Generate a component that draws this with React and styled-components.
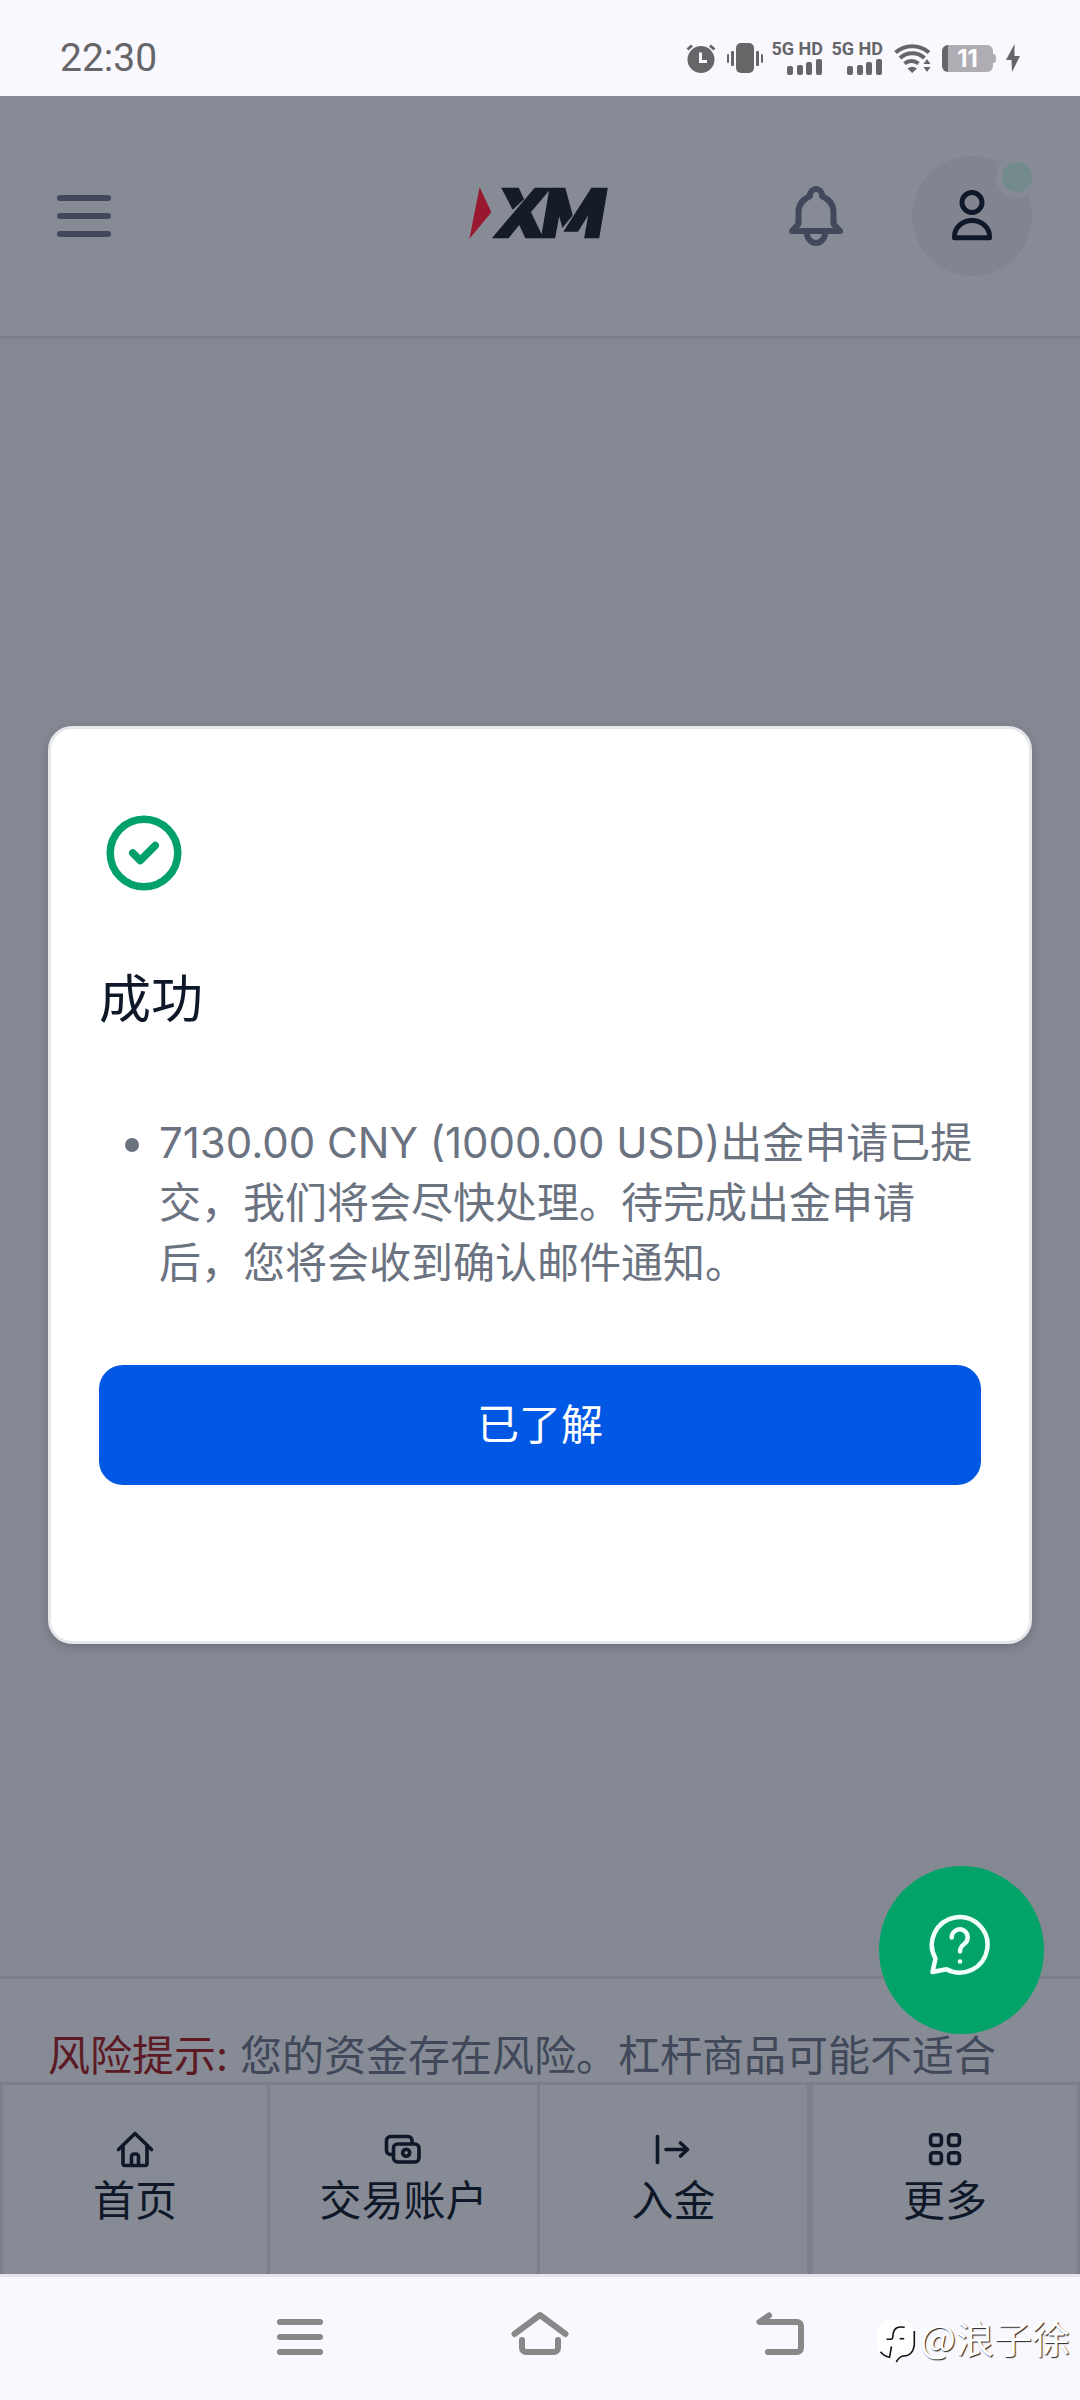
import React, { useState } from 'react';
import styled, { createGlobalStyle } from 'styled-components';

const tabs = [
  { label: '首页', icon: 'home' },
  { label: '交易账户', icon: 'accounts' },
  { label: '入金', icon: 'deposit' },
  { label: '更多', icon: 'more' },
];

const tabIcons = {
  home: (
    <>
      <path d="M4.5 20.5L21 4.5L37.5 20.5" />
      <path d="M9 17.5V34.5a2 2 0 0 0 2 2h20a2 2 0 0 0 2-2V17.5" />
      <path d="M17.5 36V27.5a2.5 2.5 0 0 1 2.5-2.5h2a2.5 2.5 0 0 1 2.5 2.5V36" />
    </>
  ),
  accounts: (
    <>
      <path d="M9 25.5H7.5a4 4 0 0 1-4-4V11.5a4 4 0 0 1 4-4H25a4 4 0 0 1 4 4V14" />
      <rect x="10.5" y="15" width="25.5" height="18" rx="4" />
      <circle cx="23.2" cy="23.8" r="3.5" />
    </>
  ),
  deposit: (
    <>
      <path d="M4.5 7.5V33.5" />
      <path d="M13 20.5H34.5M27.5 14L34.5 20.5L27.5 27" />
    </>
  ),
  more: (
    <>
      <rect x="6.6" y="5.7" width="10.8" height="10.8" rx="3" />
      <rect x="24.6" y="5.7" width="10.8" height="10.8" rx="3" />
      <rect x="6.6" y="23.7" width="10.8" height="10.8" rx="3" />
      <rect x="24.6" y="23.7" width="10.8" height="10.8" rx="3" />
    </>
  ),
};

const Signal = () => (
  <SignalWrapper>
    <Network>5G HD</Network>
    <svg width="36" height="16" viewBox="0 0 36 16" fill="currentColor">
      <rect x="0" y="7" width="6" height="9" rx="2" />
      <rect x="10" y="6" width="6" height="10" rx="2" />
      <rect x="19" y="3" width="6" height="13" rx="2" />
      <rect x="29" y="0" width="6" height="16" rx="2" />
    </svg>
  </SignalWrapper>
);

const StatusBar = () => (
  <StatusWrapper>
    <Clock>22:30</Clock>
    <StatusIcons>
      <svg width="30" height="30" viewBox="0 0 30 30">
        <circle cx="15" cy="16.5" r="13.5" fill="currentColor" />
        <path
          d="M1.5 6.5L6 2.5M28.5 6.5L24 2.5"
          stroke="currentColor"
          strokeWidth="3"
        />
        <path d="M14.5 9.5V18.5H21" stroke="#f9f8ff" strokeWidth="3" fill="none" />
      </svg>
      <svg width="36" height="30" viewBox="0 0 36 30" fill="currentColor">
        <rect x="9" y="0" width="18" height="30" rx="5" />
        <rect x="4" y="8" width="3" height="15" rx="1" />
        <rect x="0" y="11" width="2" height="9" rx="1" />
        <rect x="29" y="8" width="3" height="15" rx="1" />
        <rect x="34" y="11" width="2" height="9" rx="1" />
      </svg>
      <Signal />
      <Signal />
      <svg width="37" height="30" viewBox="0 0 37 30">
        <g fill="none" stroke="currentColor" strokeWidth="4">
          <path d="M1.5 9.5a25.5 25.5 0 0 1 33.5 0" />
          <path d="M6 15a18 18 0 0 1 24.5 0" />
          <path d="M10.5 20.5a11.5 11.5 0 0 1 14 0" />
        </g>
        <path d="M13.5 25.5q4.7-3.5 9.5 0L18.2 30z" fill="currentColor" />
        <path d="M33 16l3.5 5h-7zM33 29l3.5-5h-7z" fill="currentColor" />
      </svg>
      <Battery>11</Battery>
      <svg width="14" height="28" viewBox="0 0 14 28" fill="currentColor">
        <path d="M8.5 0L0 16h5.5L6 28L14 12H8.5z" />
      </svg>
    </StatusIcons>
  </StatusWrapper>
);

const Logo = () => (
  <svg width="143" height="58" viewBox="0 0 143 58" role="img" aria-label="XM">
    <path d="M10.6 0.3L22.4 25.3L0.4 51.7z" fill="#97182f" />
    <g fill="#161b28">
      <path d="M32.2 .7H49.8L55.1 12.3L43.7 22.7z" />
      <path
        fillRule="evenodd"
        d="M22.8 51.3L65.7 .7H96.3L103.7 28.3L93.4 41L90.2 29.3L86.1 51.3H56.3L50.2 38L39.6 51.3zM80 3.7L62 25L72.6 47.3z"
      />
      <path d="M122.4 .7H138.8L130.2 51.3H115.1L119.2 28.3L109 44.7H94.3z" />
    </g>
  </svg>
);

const Header = () => (
  <HeaderWrapper>
    <IconButton aria-label="菜单">
      <svg width="54" height="42" viewBox="0 0 54 42" fill="currentColor">
        <rect y="0" width="54" height="6" rx="3" />
        <rect y="18" width="54" height="6" rx="3" />
        <rect y="36" width="54" height="6" rx="3" />
      </svg>
    </IconButton>
    <Logo />
    <HeaderRight>
      <IconButton aria-label="通知">
        <svg
          width="72"
          height="72"
          viewBox="0 0 72 72"
          fill="none"
          stroke="currentColor"
          strokeWidth="6"
          strokeLinecap="round"
          strokeLinejoin="round"
        >
          <path d="M12 51L18.5 44V32c0-7 4-12.5 11.5-16v-1a6 6 0 0 1 12 0v1c7.5 3.5 11.5 9 11.5 16v12L60 51z" />
          <path d="M27 53a9 10 0 0 0 18 0" />
        </svg>
      </IconButton>
      <Profile aria-label="个人资料">
        <svg
          width="60"
          height="60"
          viewBox="0 0 60 60"
          fill="none"
          stroke="currentColor"
          strokeWidth="5"
          strokeLinejoin="round"
        >
          <circle cx="30" cy="16.5" r="10" />
          <path d="M12.5 51.8V50a17.5 15.5 0 0 1 35 0v1.8z" />
        </svg>
        <OnlineDot />
      </Profile>
    </HeaderRight>
  </HeaderWrapper>
);

const SuccessModal = ({ closeModal }) => (
  <ModalLayer>
    <ModalBox role="dialog" aria-modal="true" aria-labelledby="modal-title">
      <svg
        width="90"
        height="90"
        viewBox="0 0 24 24"
        fill="none"
        stroke="#02a06b"
        strokeWidth="2"
        strokeLinecap="round"
        strokeLinejoin="round"
      >
        <path d="M9 12l2 2 4-4m6 2a9 9 0 11-18 0 9 9 0 0118 0z" />
      </svg>
      <ModalTitle id="modal-title">成功</ModalTitle>
      <ModalList>
        <li>
          7130.00 CNY (1000.00 USD)出金申请已提交，我们将会尽快处理。待完成出金申请后，您将会收到确认邮件通知。
        </li>
      </ModalList>
      <ConfirmButton onClick={closeModal}>已了解</ConfirmButton>
    </ModalBox>
  </ModalLayer>
);

const SystemNav = () => (
  <NavWrapper>
    <NavButton aria-label="最近任务">
      <svg width="60" height="60" viewBox="0 0 60 60">
        <path d="M10 15H50M10 30H50M10 45H50" />
      </svg>
    </NavButton>
    <NavButton aria-label="主屏幕">
      <svg width="60" height="60" viewBox="0 0 60 60">
        <path d="M4.5 27L30 8L55.5 27" />
        <path d="M12 33V41a4 4 0 0 0 4 4H44a4 4 0 0 0 4-4V33" />
      </svg>
    </NavButton>
    <NavButton aria-label="返回">
      <svg width="60" height="60" viewBox="0 0 60 60">
        <path d="M19 8.5L9.5 15H47a4 4 0 0 1 4 4V41a4 4 0 0 1-4 4H18" />
      </svg>
    </NavButton>
    <Watermark>
      <svg width="40" height="46" viewBox="0 0 40 46">
        <path
          d="M13 1H25Q37 1 37.5 13V25Q37 36 26 37Q22 38 19 43L19.5 38H12Q0 36 0 25V13Q1 1 13 1z"
          fill="#fff"
        />
        <g fill="none" stroke="#111" strokeWidth="1.6">
          <path d="M27.7 8.3c-8-1-11 1-11.7 7.5q0 4.5-2 4.5H9.5" />
          <path d="M22.7 19.7h4.5" />
          <path d="M14.5 27.5L12.5 38.3q-5.5-1-9-5.5" />
          <path d="M37.3 12V26c-1 7-5 11-11 11q-4 .5-7 6" />
        </g>
      </svg>
      @浪子徐
    </Watermark>
  </NavWrapper>
);

const App = () => {
  const [modalOpen, setModalOpen] = useState(true);

  return (
    <>
      <GlobalStyle />
      <Page lang="zh-CN">
        <StatusBar />
        <Viewport>
          <Header />
          <Main />
          <Risk>
            <RiskTitle>风险提示:</RiskTitle> 您的资金存在风险。杠杆商品可能不适合
          </Risk>
          <TabBar>
            {tabs.map(({ label, icon }) => (
              <Tab href="#" key={label}>
                <svg width="42" height="42" viewBox="0 0 42 42">
                  {tabIcons[icon]}
                </svg>
                {label}
              </Tab>
            ))}
          </TabBar>
          {modalOpen && <SuccessModal closeModal={() => setModalOpen(false)} />}
          <HelpButton aria-label="帮助">
            <svg
              width="66"
              height="66"
              viewBox="0 0 66 66"
              fill="none"
              stroke="#f0fffa"
              strokeWidth="4.5"
              strokeLinecap="round"
              strokeLinejoin="round"
            >
              <path d="M8.5 46.5A27.8 27.8 0 1 1 19.5 57.3L5.5 60z" />
              <path d="M24.7 25.5a8 8 0 1 1 12.5 6.5q-4.2 3-4.2 7.5" />
              <circle cx="33" cy="49.5" r="2.3" fill="#f0fffa" stroke="none" />
            </svg>
          </HelpButton>
        </Viewport>
        <SystemNav />
      </Page>
    </>
  );
};

const GlobalStyle = createGlobalStyle`
  * {
    box-sizing: border-box;
  }
  body {
    margin: 0;
    font-family: Inter, 'Noto Sans CJK SC', sans-serif;
    font-size: 42px;
  }
  button {
    border: none;
    background: none;
    padding: 0;
    font: inherit;
    cursor: pointer;
  }
  svg {
    display: block;
    flex-shrink: 0;
  }
`;

const Page = styled.div`
  display: flex;
  flex-direction: column;
  min-height: 100vh;
`;

const StatusWrapper = styled.div`
  display: flex;
  align-items: center;
  justify-content: space-between;
  height: 96px;
  padding: 20px 60px 0;
  background-color: #f9f8ff;
  color: #666668;
`;

const Clock = styled.div`
  font-family: Roboto, sans-serif;
  font-size: 39px;
`;

const StatusIcons = styled.div`
  display: flex;
  align-items: center;
  gap: 11px;
`;

const SignalWrapper = styled.div`
  display: flex;
  flex-direction: column;
  align-items: flex-end;
  gap: 3px;
  width: 49px;
`;

const Network = styled.div`
  font-family: Roboto, sans-serif;
  font-size: 18px;
  font-weight: 700;
  line-height: 15px;
  white-space: nowrap;
`;

const Battery = styled.div`
  position: relative;
  width: 51px;
  height: 27px;
  margin-right: 2px;
  border-radius: 6px;
  background: linear-gradient(to right, #666668 6px, #afadb3 6px);
  color: #fff;
  font-size: 24px;
  font-weight: 700;
  line-height: 27px;
  text-align: center;
  &::after {
    content: '';
    position: absolute;
    top: 9px;
    right: -3px;
    width: 3px;
    height: 9px;
    border-radius: 0 3px 3px 0;
    background-color: #afadb3;
  }
`;

const Viewport = styled.div`
  position: relative;
  display: flex;
  flex: 1;
  flex-direction: column;
  background-color: #878b95;
`;

const HeaderWrapper = styled.header`
  display: grid;
  grid-template-columns: 1fr auto 1fr;
  align-items: center;
  height: 243px;
  padding: 0 48px;
  border-bottom: 3px solid #7c7f8b;
`;

const IconButton = styled.button`
  display: flex;
  align-items: center;
  justify-content: center;
  width: 72px;
  height: 72px;
  color: #404859;
`;

const HeaderRight = styled.div`
  display: flex;
  align-items: center;
  justify-content: flex-end;
  gap: 60px;
`;

const Profile = styled(IconButton)`
  position: relative;
  width: 120px;
  height: 120px;
  border-radius: 50%;
  background-color: #82858f;
  color: #0f1828;
`;

const OnlineDot = styled.span`
  position: absolute;
  top: 0;
  right: -6px;
  width: 42px;
  height: 42px;
  border: 6px solid #878b95;
  border-radius: 50%;
  background-color: #748b8e;
`;

const Main = styled.main`
  flex: 1;
  background-color: #848892;
`;

const Risk = styled.p`
  margin: 0;
  padding: 51px 48px 0;
  border-top: 3px solid #7c7f8b;
  color: #404859;
  line-height: 52px;
`;

const RiskTitle = styled.span`
  color: #5c1a24;
`;

const TabBar = styled.nav`
  display: grid;
  grid-template-columns: repeat(4, 1fr);
  height: 192px;
  border-top: 3px solid #7c7f8b;
`;

const Tab = styled.a`
  display: flex;
  flex-direction: column;
  align-items: center;
  padding-top: 44px;
  border-right: 3px solid #7c7f8b;
  color: #0f1828;
  line-height: 60px;
  text-decoration: none;
  &:first-child,
  &:last-child {
    border-left: 3px solid #7c7f8b;
  }
  svg {
    fill: none;
    stroke: currentColor;
    stroke-width: 3.6;
    stroke-linecap: round;
    stroke-linejoin: round;
  }
`;

const ModalLayer = styled.div`
  position: absolute;
  inset: 0;
  display: flex;
  align-items: center;
  padding: 0 48px;
`;

const ModalBox = styled.section`
  width: 100%;
  padding: 79px 48px 156px;
  border: 3px solid #e5e7eb;
  border-radius: 24px;
  background-color: #fff;
  box-shadow: 0 3px 9px rgba(17, 24, 39, 0.2);
`;

const ModalTitle = styled.h1`
  margin: 66px 0 77px;
  color: #0f1828;
  font-size: 52px;
  font-weight: 400;
  line-height: 72px;
`;

const ModalList = styled.ul`
  margin: 0 0 72px;
  padding-left: 60px;
  color: #6b7280;
  line-height: 60px;
`;

const ConfirmButton = styled.button`
  display: block;
  width: 100%;
  height: 120px;
  padding-bottom: 8px;
  border-radius: 24px;
  background-color: #0058e4;
  color: #fff;
`;

const HelpButton = styled.button`
  position: absolute;
  right: 36px;
  bottom: 240px;
  display: flex;
  align-items: center;
  justify-content: center;
  width: 165px;
  height: 168px;
  padding: 0 3px 10px 0;
  border-radius: 50%;
  background-color: #02a369;
`;

const NavWrapper = styled.nav`
  position: relative;
  display: flex;
  align-items: center;
  justify-content: center;
  gap: 180px;
  height: 126px;
  padding-bottom: 4px;
  border-top: 3px solid #e4e3ec;
  background-color: #f9f8ff;
`;

const NavButton = styled.button`
  svg {
    fill: none;
    stroke: #888;
    stroke-width: 6;
    stroke-linecap: round;
    stroke-linejoin: round;
  }
`;

const Watermark = styled.div`
  position: absolute;
  right: 10px;
  bottom: 35px;
  display: flex;
  align-items: flex-start;
  gap: 3px;
  color: #fff;
  font-family: 'Noto Sans CJK SC', sans-serif;
  font-size: 38px;
  line-height: 36px;
  text-shadow: 1px 1px 1px #222;
`;

export default App;
